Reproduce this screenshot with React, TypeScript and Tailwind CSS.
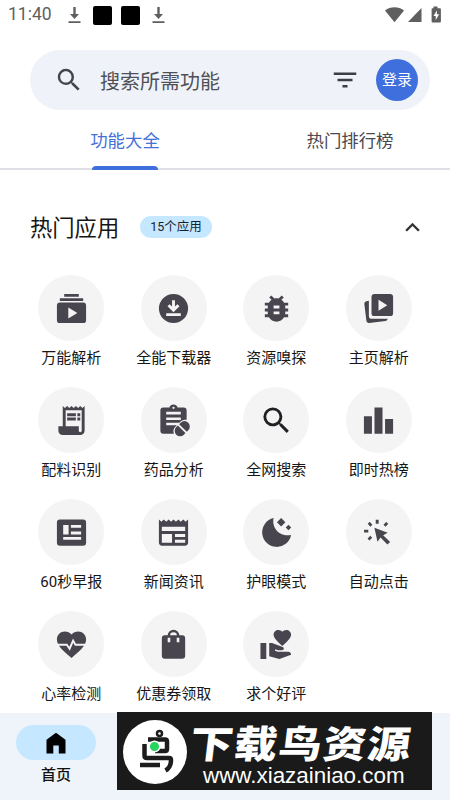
import type { ReactNode } from 'react';
import {
    MdBugReport,
    MdFilterList,
    MdKeyboardArrowUp,
    MdLeaderboard,
    MdNewspaper,
    MdSearch,
    MdVolunteerActivism,
} from 'react-icons/md';

interface AppItem {
    label: string;
    icon: ReactNode;
}

function Glyph({ children }: { children: ReactNode }) {
    return (
        <svg viewBox="0 0 24 24" className="size-[35px]" fill="currentColor">
            {children}
        </svg>
    );
}

const apps: AppItem[] = [
    {
        label: '万能解析',
        icon: (
            <Glyph>
                <path fillRule="evenodd" d="M7 2h10v1.9H7zM4 5h16v1.9H4zM4 7.900h16a2 2 0 0 1 2 2V20a2 2 0 0 1-2 2H4a2 2 0 0 1-2-2V9.900a2 2 0 0 1 2-2zM9.800 11.300v7.600L16 15.100z" />
            </Glyph>
        ),
    },
    {
        label: '全能下载器',
        icon: (
            <Glyph>
                <path fillRule="evenodd" d="M12 2a10 10 0 1 0 0 20 10 10 0 0 0 0-20zM11 6.3h2v4.4l1.7-1.6 1.4 1.4-4.1 4-4.1-4 1.4-1.4 1.7 1.6zM7 15.2h10v2H7z" />
            </Glyph>
        ),
    },
    { label: '资源嗅探', icon: <MdBugReport className="size-[35px]" /> },
    {
        label: '主页解析',
        icon: (
            <Glyph>
                <path fillRule="evenodd" d="M9.2 2H20a2 2 0 0 1 2 2v11.2a2 2 0 0 1-2 2H9.2a2 2 0 0 1-2-2V4a2 2 0 0 1 2-2zM12 6v7.6l6-3.8z" />
                <path d="M5.4 6.7v10.2a2.2 2.2 0 0 0 2.2 2.2h10.7c-.1.8-.6 1.3-1.4 1.4L5.6 21.9c-1 .1-1.8-.5-1.9-1.5L2.3 8.9c-.1-1 .5-1.8 1.5-1.9z" />
            </Glyph>
        ),
    },
    {
        label: '配料识别',
        icon: (
            <Glyph>
                <path fillRule="evenodd" d="M19.5 3.5 18 2l-1.5 1.5L15 2l-1.5 1.5L12 2l-1.5 1.5L9 2 7.5 3.5 6 2v14H3v3c0 1.66 1.34 3 3 3h12c1.66 0 3-1.34 3-3V2zM19 19c0 .55-.45 1-1 1s-1-.45-1-1v-3H8V5h11z" />
                <path d="M9 7h6v2H9zM16 7h2v2h-2zM9 10h6v2H9zM16 10h2v2h-2z" />
            </Glyph>
        ),
    },
    {
        label: '药品分析',
        icon: (
            <Glyph>
                <path fillRule="evenodd" d="M5 3h4.2a3 3 0 0 1 5.6 0H19a2 2 0 0 1 2 2v6.5c-2 0-3.2.2-4.5 1.5l-.6.6H7v1.7h7.2l-1.2 1.4c-1.2 1.4-1.3 3-.7 4.3H5a2 2 0 0 1-2-2V5a2 2 0 0 1 2-2zM7 6v1.8h10V6zM7 9.9v1.7h10V9.9zM12 2.5a.8.8 0 1 0 0 1.6.8.8 0 0 0 0-1.6z" />
                <g transform="rotate(-45 18 17.6)">
                    <path d="M17.4 13.9v7.4h-1.5a3.7 3.7 0 0 1 0-7.4zM18.7 13.9h1.4a3.7 3.7 0 0 1 0 7.4h-1.4z" />
                </g>
            </Glyph>
        ),
    },
    { label: '全网搜索', icon: <MdSearch className="size-[35px] text-[#202124]" /> },
    { label: '即时热榜', icon: <MdLeaderboard className="size-[35px]" /> },
    {
        label: '60秒早报',
        icon: (
            <Glyph>
                <path fillRule="evenodd" d="M4 3h16a2 2 0 0 1 2 2v14a2 2 0 0 1-2 2H4a2 2 0 0 1-2-2V5a2 2 0 0 1 2-2zM6.3 6.8v6.5H10V6.8zM11.6 6.8v2h7v-2zM11.6 11.3v2h7v-2zM6.3 15v2h12.3v-2z" />
            </Glyph>
        ),
    },
    { label: '新闻资讯', icon: <MdNewspaper className="size-[35px]" /> },
    {
        label: '护眼模式',
        icon: (
            <Glyph>
                <path d="M10 2.1A10 10 0 1 0 22 13.7C15 15.3 8.4 9.6 10 2.1zM15.2 2.1l2.9 2.9-2.9 2.9L12.3 5zM20.2 6.7l1.9 1.9-1.9 1.9-1.9-1.9z" />
            </Glyph>
        ),
    },
    {
        label: '自动点击',
        icon: (
            <Glyph>
                <path d="M9.2 8.8l2.1 9.6 2.1-3 4.7 4.9 1.9-1.8-4.8-4.6 3.1-1.8z" />
                <path d="M10.1 3.2h2V6h-2zM2.1 10.1H5V12H2.1zM4.6 6L6 4.7l1.8 2L6.4 8zM17.3 4.8L18.7 6l-1.9 2-1.4-1.3zM6.3 14.3l1.4 1.3-1.9 1.9-1.3-1.3z" />
            </Glyph>
        ),
    },
    {
        label: '心率检测',
        icon: (
            <Glyph>
                <path d="M12 21.2C6 16 2 12.7 2 8.5 2 5.4 4.4 3 7.5 3c1.7 0 3.4.8 4.5 2.1C13.1 3.8 14.8 3 16.5 3 19.6 3 22 5.4 22 8.5c0 4.2-4 7.5-10 12.7z" />
                <path d="M1 12.2h7.8l1.9 2.7 2.4-5.6 1.6 2.9H23" fill="none" stroke="#f4f4f4" strokeWidth="1.3" />
            </Glyph>
        ),
    },
    {
        label: '优惠券领取',
        icon: (
            <Glyph>
                <path fillRule="evenodd" d="M6 5.7h12a2 2 0 0 1 2 2v12a2 2 0 0 1-2 2H6a2 2 0 0 1-2-2v-12a2 2 0 0 1 2-2zM8 7.4v3.1h1.8V7.4zM14.2 7.4v3.1H16V7.4z" />
                <path d="M8.8 6.5V6a3.2 3.2 0 0 1 6.4 0v.5" fill="none" stroke="currentColor" strokeWidth="1.7" />
            </Glyph>
        ),
    },
    { label: '求个好评', icon: <MdVolunteerActivism className="size-[35px]" /> },
];

function DownloadMark() {
    return (
        <svg viewBox="0 0 13 18" className="h-[18px] w-[13px]" fill="currentColor">
            <path d="M5.3 1h2.400v7H11l-4.500 5L2 8h3.300zM.5 15.300h12V17H.5z" />
        </svg>
    );
}

function StatusBar() {
    return (
        <div className="flex h-[30px] shrink-0 items-center px-2 text-[#5f5f5f]">
            <span className="w-[60px] font-['Roboto',sans-serif] text-[17.5px] leading-none">11:40</span>
            <DownloadMark />
            <span className="ml-[11.5px] size-[19px] rounded-[2px] bg-black" />
            <span className="mr-3 ml-[9px] size-[19px] rounded-[2px] bg-black" />
            <DownloadMark />
            <svg viewBox="0 0 58 18" className="ml-auto h-[18px] w-[58px]" fill="currentColor">
                <path d="M1 4.5C6.500.3 14.500.3 20 4.500L10.500 16.200z" />
                <path d="M37.5 2v14H24z" />
                <path fillRule="evenodd" d="M49.500.5h4v1.700h2.400a1 1 0 0 1 1 1V15.500a1 1 0 0 1-1 1h-7.300a1 1 0 0 1-1-1V3.200a1 1 0 0 1 1-1h.9zM52.900 4.500l-3.400 5.500h2.200v4l3.500-5.800h-2.300z" />
            </svg>
        </div>
    );
}

function SearchBar() {
    return (
        <div className="mt-5 mr-5 ml-[30px] flex h-[59.5px] shrink-0 items-center rounded-full bg-[#eff3f9] pr-3 pl-6">
            <MdSearch className="size-[30px] text-[#444449]" />
            <span className="ml-4 flex-1 pt-1 text-[20px] leading-none text-[#505056]">搜索所需功能</span>
            <MdFilterList className="mr-4 size-[30px] text-[#3d3d44]" />
            <span className="flex size-[42px] items-center justify-center rounded-full bg-[#3f6fdc] pt-0.5 text-[15px] leading-none text-white">
                登录
            </span>
        </div>
    );
}

function Tabs() {
    return (
        <div className="flex h-[60.5px] shrink-0 border-b-2 border-[#dfe0e5] text-[17.4px]">
            <div className="relative flex w-[250px] justify-center pt-[18px] leading-[26px] text-[#4470d8]">
                功能大全
                <span className="absolute -bottom-[2px] left-[92px] h-[4.5px] w-[66px] rounded-t-[4px] bg-[#3f6fdc]" />
            </div>
            <div className="flex w-[200px] justify-center pt-[18px] leading-[26px] text-[#49494f]">热门排行榜</div>
        </div>
    );
}

function BottomNav() {
    return (
        <div className="relative h-[87px] shrink-0 bg-[#eff3fa] pt-3 pl-4">
            <div className="flex w-20 flex-col items-center">
                <div className="flex h-[35px] w-20 items-center justify-center rounded-full bg-[#c5e7ff]">
                    <svg viewBox="0 0 20 22" className="h-[22px] w-5">
                        <path d="M10 .7l9.5 7v13.8h-6.7v-8H7.300v8H.5V7.700z" />
                    </svg>
                </div>
                <span className="mt-1 text-[15px] leading-[22px] font-medium text-[#111]">首页</span>
            </div>
            <Watermark />
        </div>
    );
}

// Site badge, sits over the navigation bar
function Watermark() {
    return (
        <div className="absolute -top-px left-[117px] flex h-[78px] w-[315px] bg-[#1a1a1a] pt-2 pl-[6px] text-white">
            <svg viewBox="0 0 64 64" className="size-16 shrink-0">
                <circle cx="32" cy="32" r="32" fill="#fff" />
                <g fill="none" stroke="#1c1c1c" strokeWidth="4.5">
                    <circle cx="36.5" cy="13.5" r="2.5" strokeWidth="2.5" />
                    <path d="M25 19.5h17q2 0 2 2V29q0 2-2 2H32" />
                    <path d="M21.5 24v11.5q0 2.500 2.500 2.500h22q2 0 2 2c0 4-1 8-5.500 10.500" />
                    <path d="M17 45h20" />
                </g>
                <circle cx="31.500" cy="26.500" r="5.300" fill="#27d45f" stroke="#fff" strokeWidth="1.500" />
            </svg>
            <div className="ml-[3px] flex flex-col pt-[6px]">
                <span className="origin-left scale-x-[1.13] -skew-x-6 text-[38px] leading-[38px] font-black tracking-[1.3px] whitespace-nowrap">
                    下载鸟资源
                </span>
                <span className="ml-[13px] font-['Liberation_Sans',sans-serif] text-[22.4px] leading-[23px] whitespace-nowrap">
                    www.xiazainiao.com
                </span>
            </div>
        </div>
    );
}

export default function App() {
    return (
        <div className="flex h-[800px] w-[450px] flex-col overflow-hidden bg-white font-['Roboto','Noto_Sans_CJK_SC',sans-serif]">
            <StatusBar />
            <SearchBar />
            <Tabs />
            <div className="mt-[42px] flex h-[30px] shrink-0 items-center pr-[23px] pl-[30px]">
                <h2 className="pt-0.5 text-[22.3px] leading-none text-[#161616]">热门应用</h2>
                <span className="ml-[21px] flex h-[22px] w-[71.5px] items-center justify-center rounded-full bg-[#c5e7ff] text-[12.5px] leading-none text-[#17232c]">
                    15个应用
                </span>
                <MdKeyboardArrowUp className="ml-auto size-[29px] text-[#333]" />
            </div>
            <div className="mt-[33px] grid h-[438px] shrink-0 auto-rows-[112px] grid-cols-[repeat(4,102.5px)] pl-5">
                {apps.map(app => (
                    <div key={app.label} className="flex flex-col items-center">
                        <div className="flex size-[66px] items-center justify-center rounded-full bg-[#f4f4f4] text-[#48454e]">
                            {app.icon}
                        </div>
                        <span className="mt-[6px] text-[15px] leading-[22px] whitespace-nowrap text-[#161616]">{app.label}</span>
                    </div>
                ))}
            </div>
            <BottomNav />
        </div>
    );
}
